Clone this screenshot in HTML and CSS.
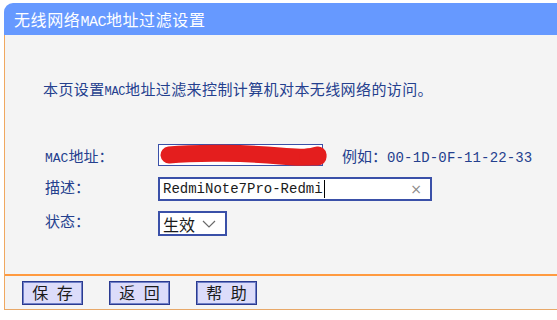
FILE: index.html
```html
<!DOCTYPE html>
<html lang="zh-CN">
<head>
<meta charset="utf-8">
<title>无线网络MAC地址过滤设置</title>
<link rel="stylesheet" href="styles.css">
</head>
<body>
<div class="frame">
  <div class="header">无线网络<span class="mac-t">MAC</span>地址过滤设置</div>
  <div class="panel">
    <div class="content">
      <p class="desc">本页设置<span class="mac-d">MAC</span>地址过滤来控制计算机对本无线网络的访问。</p>
      <div class="form">
        <div class="row">
          <div class="label"><span class="mac-l">MAC</span>地址：</div>
          <div class="field">
            <div class="box mac-box"></div>
            <svg class="scribble" width="172" height="24" viewBox="0 0 172 24">
              <path d="M11 11 C40 8 90 9 122 12 S152 12 160 11" fill="none" stroke="#e41e1e" stroke-width="17" stroke-linecap="round"/>
              <path d="M150 13 L160 13" fill="none" stroke="#e41e1e" stroke-width="17" stroke-linecap="round"/>
            </svg>
          </div>
          <div class="example">例如：<span class="mono">00-1D-0F-11-22-33</span></div>
        </div>
        <div class="row">
          <div class="label">描述：</div>
          <div class="box desc-box">
            <span class="value">RedmiNote7Pro-Redmi</span><span class="caret"></span>
            <span class="clear">×</span>
          </div>
        </div>
        <div class="row">
          <div class="label">状态：</div>
          <div class="box select-box">
            <span class="sel-text">生效</span>
            <svg class="chevron" width="14" height="8" viewBox="0 0 14 8"><path d="M1 1 L7 7 L13 1" fill="none" stroke="#6a6a6a" stroke-width="1.2"/></svg>
          </div>
        </div>
      </div>
    </div>
    <div class="buttons">
      <div class="btn">保 存</div>
      <div class="btn">返 回</div>
      <div class="btn">帮 助</div>
    </div>
  </div>
</div>
</body>
</html>
```
FILE: styles.css
```css
html, body {
  margin: 0;
  padding: 0;
  background: #ffffff;
}
body {
  font-family: "Noto Sans CJK SC", "Liberation Sans", sans-serif;
  color: #24408e;
}
.frame {
  margin: 3px 0 0 4px;
}
.header {
  height: 32px;
  line-height: 32px;
  background: #6699ff;
  border-top-left-radius: 9px;
  color: #ffffff;
  font-size: 16px;
  letter-spacing: 0.6px;
  padding-left: 10px;
  white-space: nowrap;
}
.mac-t {
  font-family: "Liberation Mono", monospace;
  font-size: 15px;
  letter-spacing: -0.5px;
}
.panel {
  background: #f4f4f4;
  border-left: 1px solid #f0a860;
  border-bottom: 1px solid #e8a868;
}
.content {
  padding: 44px 0 34px 38px;
}
.desc {
  margin: 0;
  height: 20px;
  line-height: 20px;
  font-size: 15px;
  letter-spacing: 0.4px;
  white-space: nowrap;
}
.mac-d {
  font-family: "Liberation Mono", monospace;
  font-size: 12px;
  letter-spacing: -0.4px;
}
.form {
  margin-top: 39px;
  padding-left: 2px;
}
.row {
  display: flex;
  align-items: center;
  height: 34px;
}
.label {
  width: 113px;
  flex: none;
  font-size: 15px;
  white-space: nowrap;
  margin-top: -5px;
}
.row:first-child .label {
  margin-top: 0;
}
.mac-l {
  font-family: "Liberation Mono", monospace;
  font-size: 13px;
}
.field {
  position: relative;
  width: 165px;
  height: 22px;
  flex: none;
}
.box {
  box-sizing: border-box;
  background: #ffffff;
  border: 2px solid #3a50a8;
}
.mac-box {
  width: 165px;
  height: 22px;
  border-width: 1px;
}
.scribble {
  position: absolute;
  left: 0;
  top: 0;
  overflow: visible;
}
.example {
  margin-left: 19px;
  font-size: 15px;
  white-space: nowrap;
}
.mono {
  font-family: "Liberation Mono", monospace;
  font-size: 14px;
  letter-spacing: 0.15px;
}
.desc-box {
  width: 274px;
  height: 24px;
  display: flex;
  align-items: center;
  padding-left: 3px;
}
.value {
  font-family: "Liberation Mono", monospace;
  font-size: 14px;
  color: #1a1a1a;
}
.caret {
  width: 1px;
  height: 18px;
  background: #000000;
  margin-left: 1px;
}
.clear {
  margin-left: auto;
  margin-right: 8px;
  color: #8a8a8a;
  font-family: "DejaVu Sans", sans-serif;
  font-size: 14px;
}
.select-box {
  width: 69px;
  height: 25px;
  display: flex;
  align-items: center;
  padding-left: 3px;
  margin-top: 1px;
}
.sel-text {
  font-size: 16px;
  color: #1a1a1a;
  line-height: 1;
}
.chevron {
  margin-left: 7px;
}
.buttons {
  border-top: 2px solid #ff9a40;
  height: 35px;
  box-sizing: border-box;
  display: flex;
  align-items: flex-start;
  padding: 5px 0 0 17px;
  gap: 26px;
}
.btn {
  width: 61px;
  height: 24px;
  box-sizing: border-box;
  background: #dcdcfa;
  border: 1px solid #2a3a90;
  box-shadow: inset 0 0 0 1px #7080c8;
  color: #1a1a1a;
  font-size: 16px;
  line-height: 21px;
  letter-spacing: 2.5px;
  text-indent: 2.5px;
  text-align: center;
  white-space: pre;
}
```
